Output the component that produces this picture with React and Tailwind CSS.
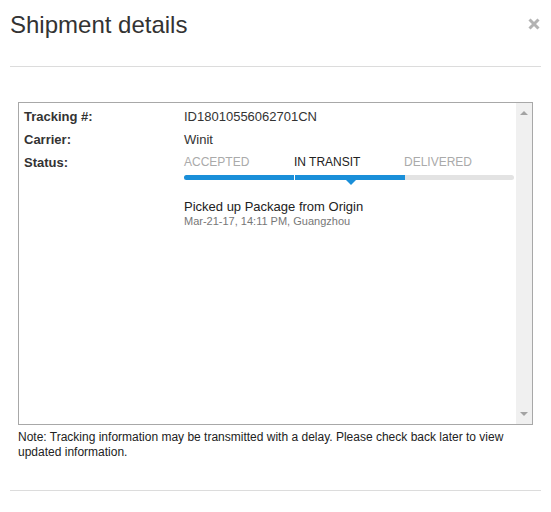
import React from "react";

export default function App() {
  return (
    <div className="w-[551px] h-[512px] bg-white font-['Liberation_Sans',Arial,sans-serif] text-[#333] px-[10px] overflow-hidden">
      <div className="h-[67px] border-b border-[#dcdcdc] flex justify-between items-start">
        <h1 className="pt-[12px] text-[24px] leading-[26px] font-normal text-[#333]">Shipment details</h1>
        <div className="pt-[18px] pr-[1px]">
          <svg width="12" height="12" viewBox="0 0 12 12">
            <path d="M1.5 1.5 L10.5 10.5 M10.5 1.5 L1.5 10.5" stroke="#b3b3b3" strokeWidth="3" />
          </svg>
        </div>
      </div>
      <div className="px-[8px] pt-[35px]">
        <div className="h-[323px] border border-[#a8a8a8] flex">
          <div className="flex-1 pl-[5px] pt-[2px]">
            <div className="grid grid-cols-[160px_1fr] text-[13px] leading-[23px]">
              <div className="font-bold">Tracking #:</div>
              <div>ID18010556062701CN</div>
              <div className="font-bold">Carrier:</div>
              <div>Winit</div>
              <div className="font-bold">Status:</div>
              <div>
                <div className="flex text-[12px] leading-[23px]">
                  <div className="w-[110px] text-[#aaaaaa]">ACCEPTED</div>
                  <div className="w-[110px] text-[#222]">IN TRANSIT</div>
                  <div className="w-[110px] text-[#aaaaaa]">DELIVERED</div>
                </div>
                <div className="relative mt-[1px] w-[330px] h-[5px] rounded-full bg-[#e3e3e3] flex overflow-visible">
                  <div className="w-[110px] h-[5px] rounded-l-full bg-[#1a8fd9]"></div>
                  <div className="w-[1px] h-[5px] bg-white"></div>
                  <div className="w-[110px] h-[5px] bg-[#1a8fd9]"></div>
                  <div className="absolute left-[162px] top-[5px] w-0 h-0 border-l-[5px] border-r-[5px] border-t-[5px] border-l-transparent border-r-transparent border-t-[#1a8fd9]"></div>
                </div>
                <div className="mt-[19px] text-[13px] leading-[16px] text-[#222]">Picked up Package from Origin</div>
                <div className="text-[11px] leading-[12px] text-[#777]">Mar-21-17, 14:11 PM, Guangzhou</div>
              </div>
            </div>
          </div>
          <div className="w-[16px] bg-[#f0f0f0] flex flex-col justify-between items-center py-[8px]">
            <svg width="8" height="4" viewBox="0 0 8 4">
              <path d="M0 4 L4 0 L8 4 Z" fill="#a3a3a3" />
            </svg>
            <svg width="8" height="4" viewBox="0 0 8 4">
              <path d="M0 0 L8 0 L4 4 Z" fill="#a3a3a3" />
            </svg>
          </div>
        </div>
        <div className="mt-[5px] text-[12px] leading-[15px] text-[#222] pr-[4px]">
          Note: Tracking information may be transmitted with a delay. Please check back later to view updated information.
        </div>
      </div>
      <div className="mt-[30px] border-b border-[#dcdcdc]"></div>
    </div>
  );
}
